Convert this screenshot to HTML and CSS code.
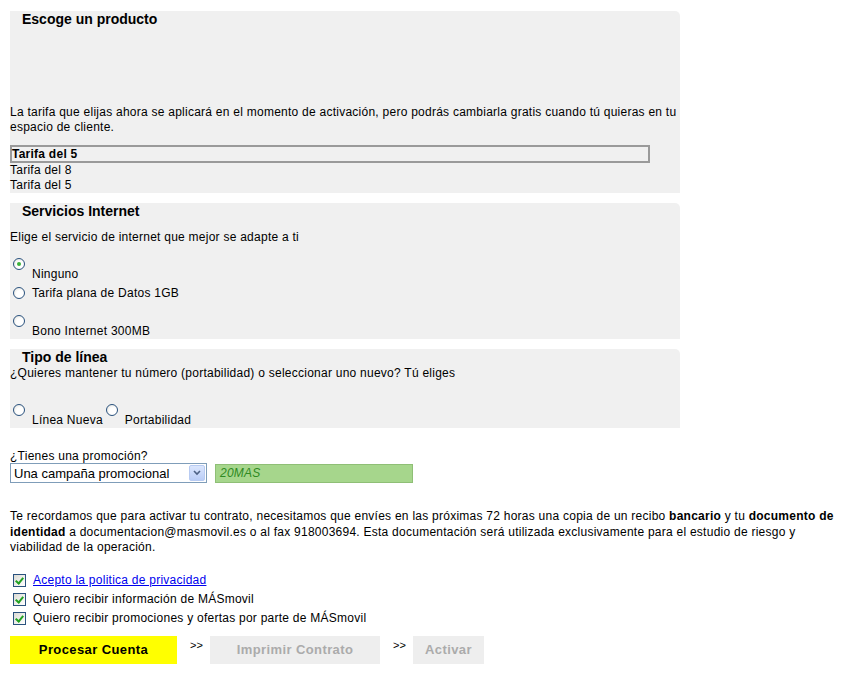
FILE: index.html
```html
<!DOCTYPE html>
<html>
<head>
  <title>Alta de cliente</title>
  <link rel="stylesheet" href="styles.css">
</head>
<body>
  <div class="page">

    <!-- Producto -->
    <div class="box box-producto">
      <h2>Escoge un producto</h2>
      <p class="intro">La tarifa que elijas ahora se aplicará en el momento de activación, pero podrás cambiarla gratis cuando tú quieras en tu espacio de cliente.</p>
      <div class="listbox">Tarifa del 5</div>
      <div class="option">Tarifa del 8</div>
      <div class="option">Tarifa del 5</div>
    </div>

    <!-- Internet -->
    <div class="box box-internet">
      <h2>Servicios Internet</h2>
      <p class="hint">Elige el servicio de internet que mejor se adapte a ti</p>
      <div class="choice drop first">
        <span class="radio checked"></span>
        <span class="label">Ninguno</span>
      </div>
      <div class="choice inline second">
        <span class="radio"></span>
        <span class="label">Tarifa plana de Datos 1GB</span>
      </div>
      <div class="choice drop third">
        <span class="radio"></span>
        <span class="label">Bono Internet 300MB</span>
      </div>
    </div>

    <!-- Linea -->
    <div class="box box-linea">
      <h2>Tipo de línea</h2>
      <p class="hint tight">¿Quieres mantener tu número (portabilidad) o seleccionar uno nuevo? Tú eliges</p>
      <div class="choices-row">
        <div class="choice drop">
          <span class="radio"></span>
          <span class="label">Línea Nueva</span>
        </div>
        <div class="choice drop">
          <span class="radio"></span>
          <span class="label">Portabilidad</span>
        </div>
      </div>
    </div>

    <!-- Promocion -->
    <div class="promo">
      <div class="promo-title">¿Tienes una promoción?</div>
      <div class="promo-row">
        <div class="select">
          <span>Una campaña promocional</span>
          <span class="select-arrow">
            <svg width="8" height="6" viewBox="0 0 8 6"><path d="M1 1 L4 4 L7 1" fill="none" stroke="#4d6185" stroke-width="1.6"/></svg>
          </span>
        </div>
        <div class="code">20MAS</div>
      </div>
    </div>

    <p class="notice">Te recordamos que para activar tu contrato, necesitamos que envíes en las próximas 72 horas una copia de un recibo <b>bancario</b> y tu <b>documento de</b> <b>identidad</b> a documentacion@masmovil.es o al fax 918003694. Esta documentación será utilizada exclusivamente para el estudio de riesgo y viabilidad de la operación.</p>

    <div class="checks">
      <div class="check-row">
        <span class="checkbox"></span>
        <a href="#" class="link">Acepto la politica de privacidad</a>
      </div>
      <div class="check-row">
        <span class="checkbox"></span>
        <span>Quiero recibir información de MÁSmovil</span>
      </div>
      <div class="check-row">
        <span class="checkbox"></span>
        <span>Quiero recibir promociones y ofertas por parte de MÁSmovil</span>
      </div>
    </div>

    <div class="actions">
      <button class="btn btn-go">Procesar Cuenta</button>
      <span class="step">&gt;&gt;</span>
      <button class="btn btn-off btn-print">Imprimir Contrato</button>
      <span class="step">&gt;&gt;</span>
      <button class="btn btn-off btn-activate">Activar</button>
    </div>

  </div>
</body>
</html>
```

FILE: styles.css
```css
body {
  margin: 0;
  font-family: "Liberation Sans", Arial, sans-serif;
  font-size: 12px;
  letter-spacing: 0.25px;
  color: #000;
  background: #fff;
}

.page {
  padding: 11px 0 0 10px;
  width: 830px;
}

.box {
  background: #f0f0f0;
  width: 670px;
  border-top-right-radius: 5px;
  margin-bottom: 10px;
}

.box h2 {
  margin: 0;
  padding: 1px 0 0 12px;
  font-size: 14px;
  line-height: 15px;
  font-weight: bold;
  letter-spacing: 0;
}

.intro {
  margin: 78px 0 0 0;
  line-height: 15px;
}

.listbox {
  margin-top: 10px;
  width: 636px;
  height: 14px;
  border: 2px solid #9a9a9a;
  font-weight: bold;
  line-height: 14px;
}

.option {
  line-height: 15px;
}

.hint {
  margin: 11px 0 0 0;
  line-height: 14px;
}

.hint.tight {
  margin-top: 1px;
}

.box-internet {
  padding-bottom: 1px;
}

.choice {
  display: flex;
  padding-left: 3px;
}

.choice .label {
  line-height: 14px;
  margin-left: 7px;
}

.choice.drop {
  align-items: flex-start;
}

.choice.drop .label {
  margin-top: 9px;
}

.choice.inline {
  align-items: center;
}

.first {
  margin-top: 14px;
}

.second {
  margin-top: 5px;
}

.third {
  margin-top: 15px;
}

.radio {
  width: 12px;
  height: 12px;
  box-sizing: border-box;
  border: 1px solid #2a527e;
  border-radius: 50%;
  background: radial-gradient(circle at 60% 60%, #ffffff 40%, #dcdcd5 100%);
  flex: none;
  position: relative;
}

.radio.checked::after {
  content: "";
  position: absolute;
  left: 3px;
  top: 3px;
  width: 4px;
  height: 4px;
  border-radius: 50%;
  background: #3bb13b;
}

.box-linea {
  padding-bottom: 1px;
}

.choices-row {
  display: flex;
  margin-top: 24px;
}

.promo {
  margin-top: 21px;
}

.promo-title {
  line-height: 14px;
}

.promo-row {
  display: flex;
  align-items: center;
}

.select {
  width: 197px;
  height: 20px;
  box-sizing: border-box;
  border: 1px solid #7f9db9;
  background: #fff;
  display: flex;
  align-items: center;
  justify-content: space-between;
  padding: 0 1px 0 3px;
  font-size: 13px;
  letter-spacing: 0;
}

.select-arrow {
  width: 16px;
  height: 16px;
  box-sizing: border-box;
  border: 1px solid #b8cbf2;
  border-radius: 2px;
  background: linear-gradient(#dbe6fd, #bacdf7);
  display: flex;
  align-items: center;
  justify-content: center;
}

.code {
  margin-left: 8px;
  width: 198px;
  height: 19px;
  box-sizing: border-box;
  border: 1px solid #8fbf76;
  background: #a6d68c;
  color: #2f8a23;
  font-style: italic;
  line-height: 17px;
  padding-left: 4px;
}

.notice {
  margin: 26px 0 0 0;
  line-height: 15.5px;
}

.checks {
  margin-top: 15px;
}

.check-row {
  display: flex;
  align-items: center;
  height: 19px;
  padding-left: 3px;
}

.checkbox {
  width: 13px;
  height: 13px;
  box-sizing: border-box;
  border: 1px solid #2a527e;
  background: linear-gradient(135deg, #dcdcd5, #ffffff);
  margin-right: 7px;
  position: relative;
  flex: none;
}

.checkbox::after {
  content: "";
  position: absolute;
  left: 3px;
  top: 1px;
  width: 3px;
  height: 6px;
  border: solid #21a121;
  border-width: 0 2px 2px 0;
  transform: rotate(40deg);
}

.link {
  color: #0000ee;
  text-decoration: underline;
}

.actions {
  display: flex;
  align-items: flex-start;
  margin-top: 8px;
}

.btn {
  border: none;
  height: 28px;
  font-family: "Liberation Sans", Arial, sans-serif;
  font-size: 13px;
  font-weight: bold;
  letter-spacing: 0.4px;
  padding: 0;
}

.btn-go {
  width: 167px;
  background: #ffff00;
  color: #000;
}

.btn-off {
  background: #eeeeee;
  color: #ababab;
}

.btn-print {
  width: 170px;
}

.btn-activate {
  width: 71px;
}

.step {
  font-size: 11px;
  line-height: 11px;
  letter-spacing: 0;
  width: 33px;
  padding-top: 4px;
  box-sizing: border-box;
  padding-left: 13px;
}
```
